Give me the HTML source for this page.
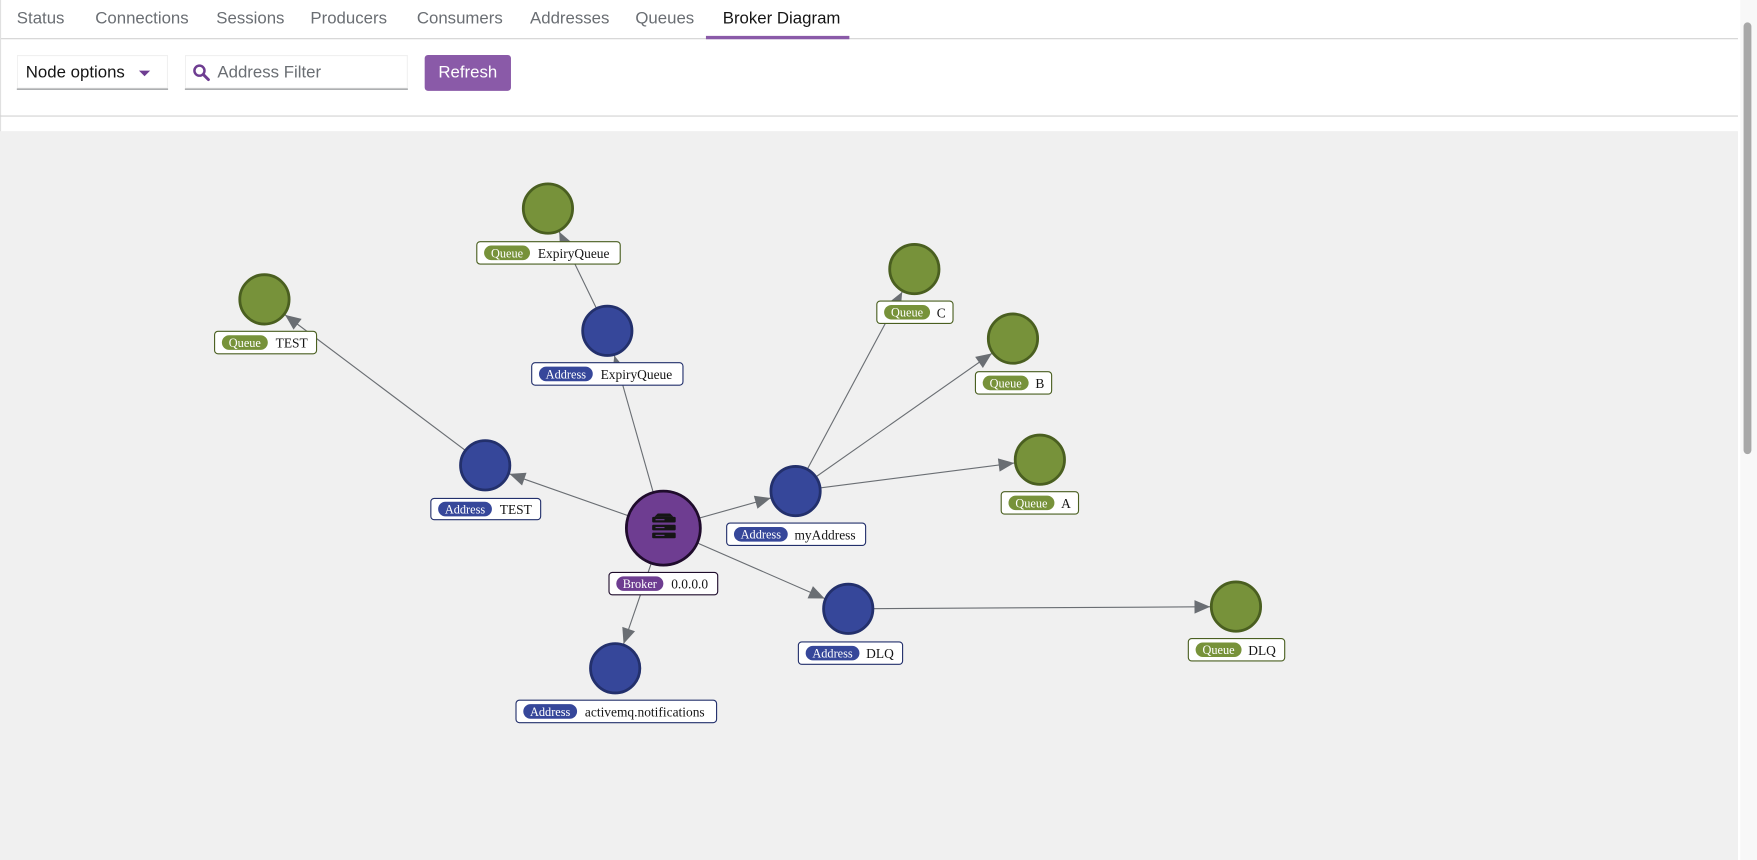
<!DOCTYPE html>
<html><head><meta charset="utf-8"><style>
html,body{margin:0;padding:0;width:1757px;height:860px;overflow:hidden;background:#fff}
#w{position:absolute;left:0;top:0;width:1568px;height:767px;transform:scale(1.12054,1.12125);transform-origin:0 0;font-family:"Liberation Sans",sans-serif}
.tab{position:absolute;top:8px;font-size:15px;color:#6a6e73}
</style></head><body><div id="w">
<div class="tab" style="left:15px">Status</div>
<div class="tab" style="left:85px">Connections</div>
<div class="tab" style="left:193px">Sessions</div>
<div class="tab" style="left:277px">Producers</div>
<div class="tab" style="left:372px">Consumers</div>
<div class="tab" style="left:473px">Addresses</div>
<div class="tab" style="left:567px">Queues</div>
<div class="tab" style="left:645px;color:#151515">Broker Diagram</div>
<div style="position:absolute;left:0;top:34px;width:1551px;height:1px;background:#d2d2d2"></div>
<div style="position:absolute;left:630px;top:32px;width:128px;height:3px;background:#8a5aa8"></div>
<div style="position:absolute;left:0;top:0;width:1px;height:767px;background:#e0e0e0"></div>
<div style="position:absolute;left:15px;top:49px;width:135px;height:30px;border-bottom:1px solid #8a8d90;box-shadow:0 0 0 1px #f0f0f0 inset"></div>
<div style="position:absolute;left:23px;top:56px;font-size:15px;color:#151515">Node options</div>
<div style="position:absolute;left:124px;top:63px;width:0;height:0;border-left:5px solid transparent;border-right:5px solid transparent;border-top:5px solid #6e3d91"></div>
<div style="position:absolute;left:165px;top:49px;width:199px;height:30px;border-bottom:1px solid #8a8d90;box-shadow:0 0 0 1px #f0f0f0 inset"></div>
<svg style="position:absolute;left:172px;top:57px" width="16" height="16"><circle cx="6" cy="6" r="4.5" fill="none" stroke="#6e3d91" stroke-width="2.2"/><line x1="9.5" y1="9.5" x2="14" y2="14" stroke="#6e3d91" stroke-width="2.6" stroke-linecap="round"/></svg>
<div style="position:absolute;left:194px;top:56px;font-size:15px;color:#6a6e73">Address Filter</div>
<div style="position:absolute;left:379px;top:49px;width:77px;height:32px;background:#8a5aa8;border-radius:3px;color:#fff;font-size:15px;text-align:center;line-height:32px">Refresh</div>
<div style="position:absolute;left:0;top:103px;width:1551px;height:1px;background:#d2d2d2"></div>
<div style="position:absolute;left:0;top:117px;width:1551px;height:650px;background:#f0f0f0"></div>
<div style="position:absolute;left:1553px;top:0;width:15px;height:767px;background:#f8f8f8"></div>
<div style="position:absolute;left:1556px;top:20px;width:7px;height:385px;background:#a8a8a8;border-radius:4px"></div>
<svg style="position:absolute;left:0;top:0" width="1568" height="767" font-family="'Liberation Serif',serif">
<defs><marker id="a" markerUnits="userSpaceOnUse" markerWidth="14" markerHeight="12" refX="37" refY="6" orient="auto" overflow="visible"><path d="M0,0L14,6L0,12z" fill="#6a6e73"/></marker></defs>
<g stroke="#6a6e73" stroke-width="1">
<line x1="592" y1="471" x2="433" y2="415" marker-end="url(#a)"/>
<line x1="592" y1="471" x2="542" y2="295" marker-end="url(#a)"/>
<line x1="592" y1="471" x2="710" y2="438" marker-end="url(#a)"/>
<line x1="592" y1="471" x2="757" y2="543" marker-end="url(#a)"/>
<line x1="592" y1="471" x2="549" y2="596" marker-end="url(#a)"/>
<line x1="433" y1="415" x2="236" y2="267" marker-end="url(#a)"/>
<line x1="542" y1="295" x2="489" y2="186" marker-end="url(#a)"/>
<line x1="710" y1="438" x2="816" y2="240" marker-end="url(#a)"/>
<line x1="710" y1="438" x2="904" y2="302" marker-end="url(#a)"/>
<line x1="710" y1="438" x2="928" y2="410" marker-end="url(#a)"/>
<line x1="757" y1="543" x2="1103" y2="541" marker-end="url(#a)"/>
</g>
<g fill="#36479a" stroke="#23306c" stroke-width="2.5">
<circle cx="542" cy="295" r="22"/><circle cx="433" cy="415" r="22"/><circle cx="710" cy="438" r="22"/><circle cx="757" cy="543" r="22"/><circle cx="549" cy="596" r="22"/>
</g>
<g fill="#77923a" stroke="#4a5f20" stroke-width="2.5">
<circle cx="489" cy="186" r="22"/><circle cx="236" cy="267" r="22"/><circle cx="816" cy="240" r="22"/><circle cx="904" cy="302" r="22"/><circle cx="928" cy="410" r="22"/><circle cx="1103" cy="541" r="22"/>
</g>
<circle cx="592" cy="471" r="33" fill="#6e3d91" stroke="#1f0c2c" stroke-width="2.5"/>
<g fill="#151515"><rect x="582" y="461" width="21" height="5" rx="1"/><rect x="582" y="468" width="21" height="5" rx="1"/><rect x="582" y="475" width="21" height="5" rx="1"/><path d="M584,461l3,-3h11l3,3z"/></g>
<g fill="#6e3d91"><rect x="585" y="470" width="8" height="1"/><rect x="585" y="477" width="8" height="1"/><rect x="585" y="463" width="8" height="1"/></g>
<g font-size="12" fill="#151515">
<!-- label helper: box, pill, texts -->
<g><rect x="425.5" y="215.5" width="128" height="20" rx="3" fill="#fff" stroke="#4a5f20"/><rect x="432" y="219" width="41" height="13" rx="6.5" fill="#77923a"/><text x="452.5" y="229.5" font-size="11" fill="#fff" text-anchor="middle">Queue</text><text x="480" y="230">ExpiryQueue</text></g>
<g><rect x="191.5" y="295.5" width="91" height="20" rx="3" fill="#fff" stroke="#4a5f20"/><rect x="198" y="299" width="41" height="13" rx="6.5" fill="#77923a"/><text x="218.5" y="309.5" font-size="11" fill="#fff" text-anchor="middle">Queue</text><text x="246" y="310">TEST</text></g>
<g><rect x="474.5" y="323.5" width="135" height="20" rx="3" fill="#fff" stroke="#23306c"/><rect x="481" y="327" width="48" height="13" rx="6.5" fill="#36479a"/><text x="505" y="337.5" font-size="11" fill="#fff" text-anchor="middle">Address</text><text x="536" y="338">ExpiryQueue</text></g>
<g><rect x="782.5" y="268.5" width="68" height="20" rx="3" fill="#fff" stroke="#4a5f20"/><rect x="789" y="272" width="41" height="13" rx="6.5" fill="#77923a"/><text x="809.5" y="282.5" font-size="11" fill="#fff" text-anchor="middle">Queue</text><text x="836" y="283">C</text></g>
<g><rect x="870.5" y="331.5" width="68" height="20" rx="3" fill="#fff" stroke="#4a5f20"/><rect x="877" y="335" width="41" height="13" rx="6.5" fill="#77923a"/><text x="897.5" y="345.5" font-size="11" fill="#fff" text-anchor="middle">Queue</text><text x="924" y="346">B</text></g>
<g><rect x="384.5" y="444.5" width="98" height="19" rx="3" fill="#fff" stroke="#23306c"/><rect x="391" y="447.5" width="48" height="13" rx="6.5" fill="#36479a"/><text x="415" y="458" font-size="11" fill="#fff" text-anchor="middle">Address</text><text x="446" y="458.5">TEST</text></g>
<g><rect x="893.5" y="438.5" width="69" height="20" rx="3" fill="#fff" stroke="#4a5f20"/><rect x="900" y="442" width="41" height="13" rx="6.5" fill="#77923a"/><text x="920.5" y="452.5" font-size="11" fill="#fff" text-anchor="middle">Queue</text><text x="947" y="453">A</text></g>
<g><rect x="648.5" y="466.5" width="124" height="20" rx="3" fill="#fff" stroke="#23306c"/><rect x="655" y="470" width="48" height="13" rx="6.5" fill="#36479a"/><text x="679" y="480.5" font-size="11" fill="#fff" text-anchor="middle">Address</text><text x="709" y="481">myAddress</text></g>
<g><rect x="543.5" y="510.5" width="97" height="20" rx="3" fill="#fff" stroke="#1f0c2c"/><rect x="550" y="514" width="42" height="13" rx="6.5" fill="#6e3d91"/><text x="571" y="524.5" font-size="11" fill="#fff" text-anchor="middle">Broker</text><text x="599" y="525">0.0.0.0</text></g>
<g><rect x="712.5" y="572.5" width="93" height="20" rx="3" fill="#fff" stroke="#23306c"/><rect x="719" y="576" width="48" height="13" rx="6.5" fill="#36479a"/><text x="743" y="586.5" font-size="11" fill="#fff" text-anchor="middle">Address</text><text x="773" y="587">DLQ</text></g>
<g><rect x="1060.5" y="569.5" width="86" height="20" rx="3" fill="#fff" stroke="#4a5f20"/><rect x="1067" y="573" width="41" height="13" rx="6.5" fill="#77923a"/><text x="1087.5" y="583.5" font-size="11" fill="#fff" text-anchor="middle">Queue</text><text x="1114" y="584">DLQ</text></g>
<g><rect x="460.5" y="624.5" width="179" height="20" rx="3" fill="#fff" stroke="#23306c"/><rect x="467" y="628" width="48" height="13" rx="6.5" fill="#36479a"/><text x="491" y="638.5" font-size="11" fill="#fff" text-anchor="middle">Address</text><text x="522" y="639">activemq.notifications</text></g>
</g>
</svg>
</div></body></html>
